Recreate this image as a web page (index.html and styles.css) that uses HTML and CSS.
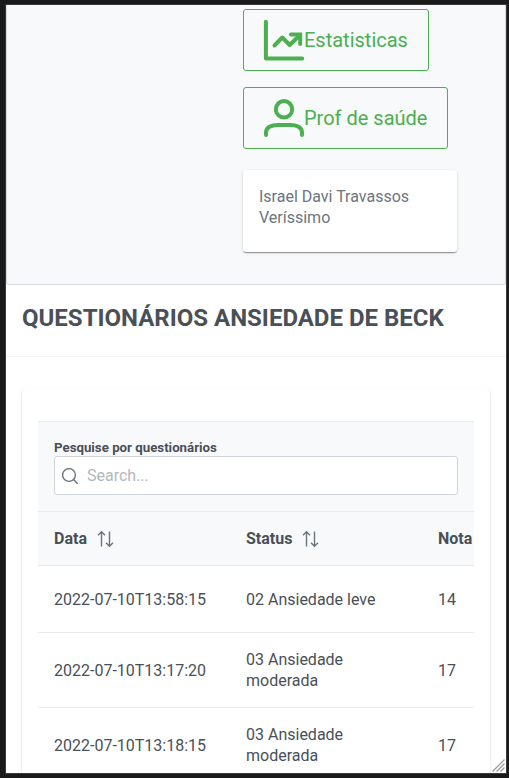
FILE: index.html
```html
<!DOCTYPE html>
<html lang="pt-BR">
<head>
<meta charset="utf-8">
<title>Questionários</title>
<link rel="stylesheet" href="styles.css">
</head>
<body>
<div class="viewport">
  <header class="toolbar">
    <button class="btn" type="button">
      <svg class="btn-icon" viewBox="0 0 40 40"><path d="M1.9 1.8V38.6H38.2M10.5 25.5L18.3 17.5L25.7 25L36 15"/><path class="miter" d="M27 14.6H36.2V24"/></svg>
      <span>Estatisticas</span>
    </button>
    <button class="btn" type="button">
      <svg class="btn-icon" viewBox="0 0 40 40"><circle cx="20" cy="11.3" r="8.2"/><path d="M2 37V34.5C2 29.5 7 26.9 14 26.9H26C33 26.9 38 29.5 38 34.5V37"/></svg>
      <span>Prof de saúde</span>
    </button>
    <div class="card user-card">Israel Davi Travassos Veríssimo</div>
  </header>
  <div class="title-bar"><h1>QUESTIONÁRIOS ANSIEDADE DE BECK</h1></div>
  <main class="card content">
    <div class="table-wrap">
      <div class="search-panel">
        <h5>Pesquise por questionários</h5>
        <label class="search">
          <svg class="search-icon" viewBox="0 0 16 16"><circle cx="7" cy="7" r="6.4"/><path d="M11.6 11.6L15.4 15.4"/></svg>
          <input type="text" placeholder="Search...">
        </label>
      </div>
      <div class="scroller">
        <table>
          <thead>
            <tr>
              <th>Data<svg class="sort" viewBox="0 0 16 16"><path d="M4.5 15.6V.8M1 4.2L4.5.7L8 4.2M12.5 .4V15.2M9 11.8L12.5 15.3L16 11.8"/></svg></th>
              <th>Status<svg class="sort" viewBox="0 0 16 16"><path d="M4.5 15.6V.8M1 4.2L4.5.7L8 4.2M12.5 .4V15.2M9 11.8L12.5 15.3L16 11.8"/></svg></th>
              <th>Nota</th>
            </tr>
          </thead>
          <tbody>
            <tr class="short"><td>2022-07-10T13:58:15</td><td>02 Ansiedade leve</td><td>14</td></tr>
            <tr><td>2022-07-10T13:17:20</td><td>03 Ansiedade moderada</td><td>17</td></tr>
            <tr><td>2022-07-10T13:18:15</td><td>03 Ansiedade moderada</td><td>17</td></tr>
          </tbody>
        </table>
      </div>
    </div>
  </main>
  <svg class="grip" viewBox="0 0 13 13"><path d="M.5 12.5L12.5 .5M4.5 12.5L12.5 4.5M8.5 12.5L12.5 8.5"/></svg>
</div>
</body>
</html>
```

FILE: styles.css
```css
* { box-sizing: border-box; }

body {
  margin: 0;
  height: 778px;
  overflow: hidden;
  padding: 5px 3px 5px 6px;
  background: #1a1a1b;
  color: #495057;
  font: 16px/21px Roboto, sans-serif;
}

.viewport {
  position: relative;
  height: 768px;
  overflow: hidden;
  background: #fff;
  box-shadow: 0 0 0 1px #3a3a3d;
}

.toolbar {
  display: flex;
  flex-direction: column;
  align-items: flex-start;
  gap: 16px;
  height: 280px;
  padding: 4px 0 0 236px;
  background: #f8f9fb;
  border: solid #d6dadf;
  border-width: 0 1px 1px;
  border-radius: 0 0 3px 3px;
}

.btn {
  display: flex;
  align-items: center;
  height: 62px;
  padding: 0 20px;
  border: 1px solid #4caf50;
  border-radius: 3px;
  background: transparent;
  color: #4caf50;
  font: 20px/24px Roboto, sans-serif;
}

.btn-icon {
  width: 40px;
  height: 40px;
  overflow: visible;
  fill: none;
  stroke: #4caf50;
  stroke-width: 4;
  stroke-linecap: round;
  stroke-linejoin: round;
}

.btn-icon .miter { stroke-linejoin: miter; }

.card {
  background: #fff;
  border-radius: 3px;
  box-shadow: 0 2px 1px -1px rgba(0, 0, 0, .2), 0 1px 1px rgba(0, 0, 0, .14), 0 1px 3px rgba(0, 0, 0, .12);
}

.user-card {
  width: 214px;
  height: 82px;
  margin-top: 5px;
  padding: 16px;
  color: #6c757d;
  box-shadow: 0 2px 1px -1px rgba(0, 0, 0, .22), 0 1px 1px rgba(0, 0, 0, .16), 0 1px 3px rgba(0, 0, 0, .16);
}

.title-bar {
  height: 72px;
  padding: 16px;
  border-bottom: 1px solid #f3f4f5;
}

h1 {
  margin: 0;
  font-size: 24px;
  line-height: 34px;
  font-weight: 700;
}

.content {
  height: 500px;
  margin: 32px 16px 0;
  padding: 32px 16px 0;
}

.search-panel {
  height: 91px;
  padding: 17px 16px 0;
  background: #f8f9fb;
  border: solid #e9ecef;
  border-width: 1px 0;
}

h5 {
  margin: 0;
  font-size: 13.28px;
  line-height: 17px;
  font-weight: 700;
}

.search {
  display: flex;
  align-items: center;
  gap: 9px;
  height: 39px;
  padding: 0 7px;
  background: #fff;
  border: 1px solid #ced4da;
  border-radius: 3px;
}

.search-icon {
  width: 16px;
  height: 16px;
  margin-top: 1px;
  fill: none;
  stroke: #6c757d;
  stroke-width: 1.4;
  stroke-linecap: round;
}

.search input {
  flex: 1;
  min-width: 0;
  padding: 0;
  border: 0;
  outline: 0;
  background: transparent;
  font: 16px/21px Roboto, sans-serif;
}

.search input::placeholder { color: #b3b8bd; }

.scroller { overflow: hidden; }

table {
  width: 576px;
  table-layout: fixed;
  border-collapse: separate;
  border-spacing: 0;
}

th, td {
  padding: 0 16px;
  border-bottom: 1px solid #e9ecef;
  text-align: left;
}

th {
  height: 54px;
  background: #f8f9fb;
  font-weight: 700;
}

td { height: 75px; }
.short td { height: 67px; }

.sort {
  width: 16px;
  height: 16px;
  margin-left: 10px;
  vertical-align: -3px;
  overflow: visible;
  fill: none;
  stroke: #6c757d;
  stroke-width: 1.4;
}

.grip {
  position: absolute;
  right: 1px;
  bottom: 1px;
  width: 13px;
  height: 13px;
  fill: none;
  stroke: #999;
  stroke-width: 1.2;
}
```
